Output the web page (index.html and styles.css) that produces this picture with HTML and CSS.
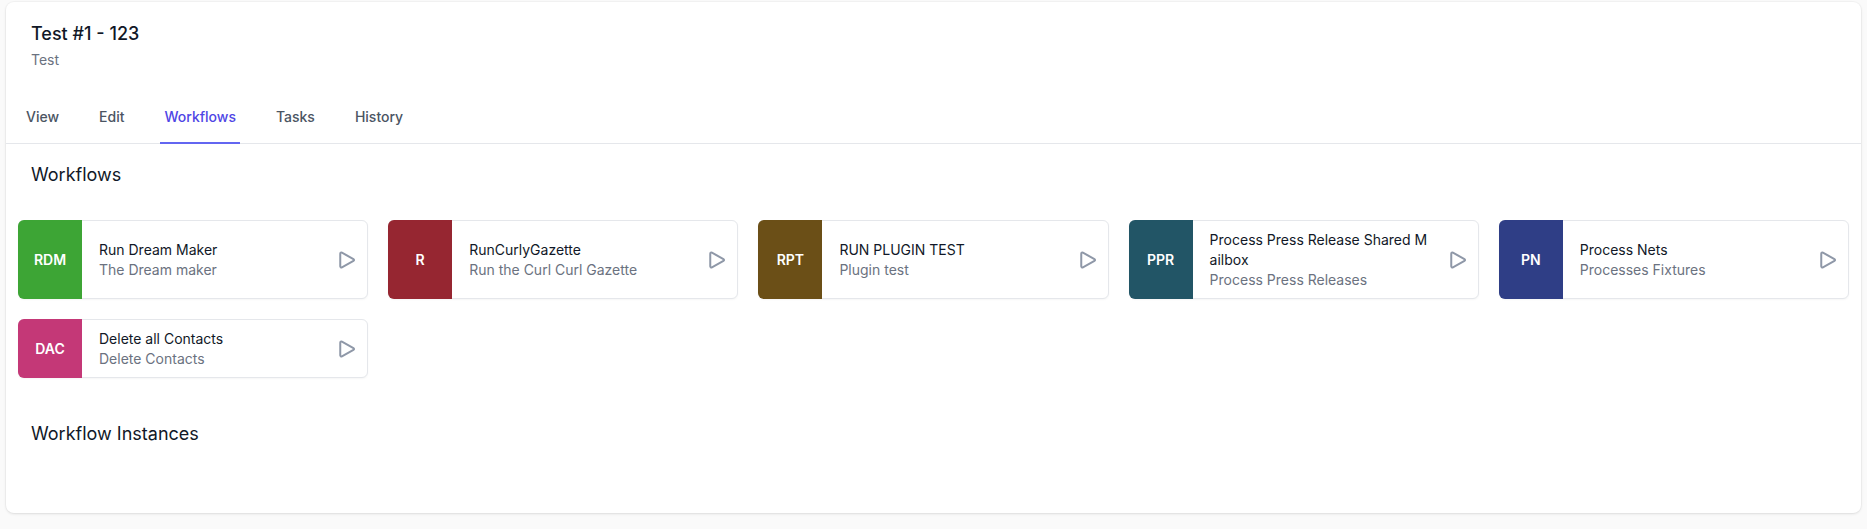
FILE: index.html
```html
<!DOCTYPE html>
<html lang="en">
<head>
<meta charset="utf-8">
<title>Test #1 - 123</title>
<link rel="stylesheet" href="styles.css">
</head>
<body>
<div class="page">
  <div class="card">
    <div class="header">
      <h1 class="title">Test #1 - 123</h1>
      <p class="subtitle">Test</p>
    </div>
    <nav class="tabs">
      <a class="tab">View</a>
      <a class="tab">Edit</a>
      <a class="tab active">Workflows</a>
      <a class="tab">Tasks</a>
      <a class="tab">History</a>
    </nav>
    <h2 class="section-title first">Workflows</h2>
    <div class="wf-grid">
      <div class="wf">
        <div class="wf-badge c-green">RDM</div>
        <div class="wf-text"><div class="wf-name">Run Dream Maker</div><div class="wf-desc">The Dream maker</div></div>
        <svg class="wf-play" viewBox="0 0 24 24" fill="none" stroke="currentColor" stroke-width="2" stroke-linejoin="round"><path d="M5.25 5.653c0-.856.917-1.398 1.667-.986l11.54 6.347a1.125 1.125 0 0 1 0 1.972l-11.54 6.347a1.125 1.125 0 0 1-1.667-.986V5.653Z"/></svg>
      </div>
      <div class="wf">
        <div class="wf-badge c-red">R</div>
        <div class="wf-text"><div class="wf-name">RunCurlyGazette</div><div class="wf-desc">Run the Curl Curl Gazette</div></div>
        <svg class="wf-play" viewBox="0 0 24 24" fill="none" stroke="currentColor" stroke-width="2" stroke-linejoin="round"><path d="M5.25 5.653c0-.856.917-1.398 1.667-.986l11.54 6.347a1.125 1.125 0 0 1 0 1.972l-11.54 6.347a1.125 1.125 0 0 1-1.667-.986V5.653Z"/></svg>
      </div>
      <div class="wf">
        <div class="wf-badge c-brown">RPT</div>
        <div class="wf-text"><div class="wf-name">RUN PLUGIN TEST</div><div class="wf-desc">Plugin test</div></div>
        <svg class="wf-play" viewBox="0 0 24 24" fill="none" stroke="currentColor" stroke-width="2" stroke-linejoin="round"><path d="M5.25 5.653c0-.856.917-1.398 1.667-.986l11.54 6.347a1.125 1.125 0 0 1 0 1.972l-11.54 6.347a1.125 1.125 0 0 1-1.667-.986V5.653Z"/></svg>
      </div>
      <div class="wf">
        <div class="wf-badge c-teal">PPR</div>
        <div class="wf-text"><div class="wf-name">Process Press Release Shared Mailbox</div><div class="wf-desc">Process Press Releases</div></div>
        <svg class="wf-play" viewBox="0 0 24 24" fill="none" stroke="currentColor" stroke-width="2" stroke-linejoin="round"><path d="M5.25 5.653c0-.856.917-1.398 1.667-.986l11.54 6.347a1.125 1.125 0 0 1 0 1.972l-11.54 6.347a1.125 1.125 0 0 1-1.667-.986V5.653Z"/></svg>
      </div>
      <div class="wf">
        <div class="wf-badge c-navy">PN</div>
        <div class="wf-text"><div class="wf-name">Process Nets</div><div class="wf-desc">Processes Fixtures</div></div>
        <svg class="wf-play" viewBox="0 0 24 24" fill="none" stroke="currentColor" stroke-width="2" stroke-linejoin="round"><path d="M5.25 5.653c0-.856.917-1.398 1.667-.986l11.54 6.347a1.125 1.125 0 0 1 0 1.972l-11.54 6.347a1.125 1.125 0 0 1-1.667-.986V5.653Z"/></svg>
      </div>
      <div class="wf">
        <div class="wf-badge c-pink">DAC</div>
        <div class="wf-text"><div class="wf-name">Delete all Contacts</div><div class="wf-desc">Delete Contacts</div></div>
        <svg class="wf-play" viewBox="0 0 24 24" fill="none" stroke="currentColor" stroke-width="2" stroke-linejoin="round"><path d="M5.25 5.653c0-.856.917-1.398 1.667-.986l11.54 6.347a1.125 1.125 0 0 1 0 1.972l-11.54 6.347a1.125 1.125 0 0 1-1.667-.986V5.653Z"/></svg>
      </div>
    </div>
    <h2 class="section-title second">Workflow Instances</h2>
  </div>
</div>
</body>
</html>
```

FILE: styles.css
```css
* { box-sizing: border-box; }

html, body {
  margin: 0;
  padding: 0;
  background: #fafafa;
  font-family: Inter, "Noto Sans", "Liberation Sans", sans-serif;
  color: #111827;
}

.page {
  padding: 2px 6px 16px 6px;
}

.card {
  background: #ffffff;
  border-radius: 8px;
  box-shadow: 0 1px 3px rgba(0, 0, 0, 0.10), 0 0 0 1px rgba(0, 0, 0, 0.025);
  height: 511px;
}

.header {
  padding: 18px 25px 21px 25px;
}

.title {
  margin: 0;
  font-size: 18px;
  line-height: 28px;
  font-weight: 500;
  color: #111827;
}

.subtitle {
  margin: 2px 0 0 0;
  font-size: 14px;
  line-height: 20px;
  color: #6b7280;
}

.tabs {
  display: flex;
  gap: 32px;
  padding: 0 16px;
  border-bottom: 1px solid #e5e7eb;
}

.tab {
  display: block;
  padding: 16px 4px 15px 4px;
  margin-bottom: -1px;
  font-size: 14px;
  line-height: 20px;
  font-weight: 500;
  color: #4b5563;
  border-bottom: 2px solid transparent;
  cursor: pointer;
}

.tab.active {
  color: #4f46e5;
  border-bottom-color: #6366f1;
}

.section-title {
  margin: 0;
  padding: 0 25px;
  font-size: 18px;
  line-height: 28px;
  font-weight: 400;
  color: #111827;
}

.section-title.first {
  padding-top: 17px;
}

.section-title.second {
  padding-top: 42px;
}

.wf-grid {
  display: grid;
  grid-template-columns: repeat(5, 1fr);
  gap: 20px;
  padding: 31px 12px 0 12px;
}

.wf {
  display: flex;
  align-items: center;
  border: 1px solid #e5e7eb;
  border-radius: 6px;
  background: #fff;
  box-shadow: 0 1px 2px rgba(0, 0, 0, 0.04);
  padding-right: 8px;
  min-height: 59px;
}

.wf-badge {
  align-self: stretch;
  flex: 0 0 64px;
  margin: -1px 0 -1px -1px;
  border-radius: 6px 0 0 6px;
  display: flex;
  align-items: center;
  justify-content: center;
  color: #ffffff;
  font-size: 14px;
  font-weight: 600;
}

.c-green { background: #3da535; }
.c-red { background: #962631; }
.c-brown { background: #6b4f17; }
.c-teal { background: #225566; }
.c-navy { background: #2f3e86; }
.c-pink { background: #c43877; }

.wf-text {
  flex: 1 1 auto;
  min-width: 0;
  padding: 9px 16px 8px 17px;
  font-size: 14px;
  line-height: 20px;
  word-break: break-all;
}

.wf-name {
  color: #111827;
}

.wf-desc {
  color: #6b7280;
}

.wf-play {
  flex: 0 0 24px;
  width: 24px;
  height: 24px;
  color: #8f98a8;
}
```
